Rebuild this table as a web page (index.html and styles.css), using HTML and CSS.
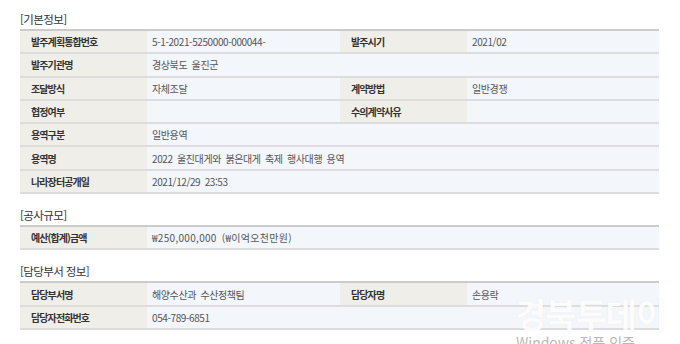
FILE: index.html
```html
<!DOCTYPE html>
<html lang="ko">
<head>
<meta charset="utf-8">
<link rel="stylesheet" href="styles.css">
</head>
<body>
<section class="sec">
  <h2 class="title">[기본정보]</h2>
  <div class="grid">
    <div class="th">발주계획통합번호</div><div class="td">5-1-2021-5250000-000044-</div><div class="th">발주시기</div><div class="td">2021/02</div>
    <div class="th">발주기관명</div><div class="td span3">경상북도 울진군</div>
    <div class="th">조달방식</div><div class="td">자체조달</div><div class="th">계약방법</div><div class="td">일반경쟁</div>
    <div class="th">협정여부</div><div class="td"></div><div class="th">수의계약사유</div><div class="td"></div>
    <div class="th">용역구분</div><div class="td span3">일반용역</div>
    <div class="th">용역명</div><div class="td span3">2022 울진대게와 붉은대게 축제 행사대행 용역</div>
    <div class="th">나라장터공개일</div><div class="td span3">2021/12/29 23:53</div>
  </div>
</section>
<section class="sec">
  <h2 class="title">[공사규모]</h2>
  <div class="grid">
    <div class="th">예산(합계)금액</div><div class="td span3 wide">₩250,000,000 (₩이억오천만원)</div>
  </div>
</section>
<section class="sec">
  <h2 class="title">[담당부서 정보]</h2>
  <div class="grid">
    <div class="th">담당부서명</div><div class="td">해양수산과 수산정책팀</div><div class="th">담당자명</div><div class="td">손용락</div>
    <div class="th">담당자전화번호</div><div class="td span3">054-789-6851</div>
  </div>
</section>
<div class="watermark">경북투데이</div>
<div class="activate">Windows 정품 인증</div>
</body>
</html>
```
FILE: styles.css
```css
html, body {
  margin: 0;
  background: #ffffff;
}
body {
  padding: 11px 21px 0 20px;
  font-family: "Noto Sans CJK KR", "Noto Sans", sans-serif;
  position: relative;
  height: 344px;
  box-sizing: border-box;
  overflow: hidden;
}
.sec {
  margin-bottom: 13px;
}
.title {
  margin: 0 0 2px 0;
  font-size: 11.5px;
  line-height: 16px;
  font-weight: normal;
  color: #333;
  letter-spacing: -0.6px;
}
.grid {
  display: grid;
  grid-template-columns: 127px 193px 127px 192px;
  border-top: 2px solid #cbcbcb;
}
.th, .td {
  height: 21.3px;
  border-bottom: 2px solid #dddddd;
  display: flex;
  align-items: center;
  font-size: 10px;
  white-space: nowrap;
  overflow: hidden;
}
.th {
  background: #efeee9;
  color: #333;
  font-weight: bold;
  padding-left: 11px;
  letter-spacing: -0.9px;
}
.td {
  background: #f3f6fb;
  color: #555;
  padding-left: 5px;
  letter-spacing: -0.4px;
  word-spacing: 2px;
}
.wide {
  letter-spacing: 0.3px;
}
.span3 {
  grid-column: span 3;
}
.watermark {
  position: absolute;
  left: 515px;
  top: 289px;
  font-size: 34px;
  font-weight: bold;
  color: rgba(255, 255, 255, 0.92);
  text-shadow: 0 0 1px rgba(160, 160, 160, 0.2);
  letter-spacing: -1px;
  white-space: nowrap;
}
.activate {
  position: absolute;
  left: 516px;
  top: 332px;
  font-size: 14px;
  color: #b8b8b8;
  white-space: nowrap;
}
```
